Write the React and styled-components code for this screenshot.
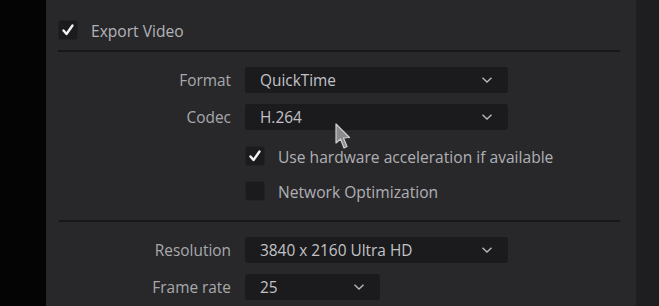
import React from 'react';
import styled, { createGlobalStyle } from 'styled-components';

const Global = createGlobalStyle`
    html, body {
        margin: 0;
        padding: 0;
        background: #030303;
        overflow: hidden;
    }
    body {
        font-family: "Open Sans", "Noto Sans", sans-serif;
    }
`;

const Screen = styled.div`
    display: flex;
    width: 659px;
    height: 306px;
    overflow: hidden;
`;

const LeftGap = styled.div`
    width: 46px;
    background: #040404;
`;

const Panel = styled.div`
    position: relative;
    width: 590px;
    background: #28282b;
    display: flex;
    flex-direction: column;
`;

const RightGap = styled.div`
    flex: 1;
    background: #1e1e21;
`;

const HeaderRow = styled.div`
    display: flex;
    align-items: center;
    gap: 13px;
    padding: 20px 0 0 12px;
    height: 20px;
`;

const HeaderText = styled.span`
    color: #b4b4b8;
    font-size: 15.6px;
    line-height: 20px;
    padding-top: 1px;
`;

const Divider = styled.div`
    height: 2px;
    background: #17171a;
    margin: ${p => p.$mt}px 16px 0 ${p => p.$ml}px;
`;

const Row = styled.div`
    display: flex;
    align-items: center;
    height: 26px;
    margin-top: ${p => p.$mt}px;
`;

const Label = styled.div`
    width: 199px;
    box-sizing: border-box;
    padding: 2px 14px 0 0;
    text-align: right;
    color: #a8a8ac;
    font-size: 15.4px;
    line-height: 20px;
`;

const Select = styled.div`
    width: ${p => p.$w}px;
    height: 26px;
    box-sizing: border-box;
    background: #1b1b1e;
    border-radius: 3px;
    display: flex;
    align-items: center;
    justify-content: space-between;
    padding: 0 15px;
    color: #c2c2c6;
    font-size: 15.4px;
    line-height: 20px;

    span {
        padding-top: 2px;
    }
`;

const CheckRow = styled.div`
    display: flex;
    align-items: center;
    gap: 13px;
    height: 20px;
    margin: ${p => p.$mt}px 0 0 199px;
    color: #b0b0b4;
    font-size: 15.6px;
    line-height: 20px;

    span {
        padding-top: 1px;
    }
`;

const Box = styled.div`
    width: 20px;
    height: 20px;
    box-sizing: border-box;
    border-radius: 3px;
    background: #1b1b1e;
    border: 1px solid #222225;
    display: flex;
    align-items: center;
    justify-content: center;
`;

const Cursor = styled.svg`
    position: absolute;
    left: 288px;
    top: 122px;
    filter: blur(0.7px);
`;

const Check = ({ on }) => (
    <Box>
        {on && (
            <svg width="14" height="14" viewBox="0 0 14 14">
                <path d="M2.5 7.5 L5.5 11 L11.5 2.5" fill="none" stroke="#f2f2f2" strokeWidth="2.4" strokeLinecap="round" strokeLinejoin="round" />
            </svg>
        )}
    </Box>
);

const Chevron = () => (
    <svg width="12" height="8" viewBox="0 0 12 8">
        <path d="M1.5 1.8 L6 6 L10.5 1.8" fill="none" stroke="#b8b8bc" strokeWidth="1.4" />
    </svg>
);

const Dropdown = ({ value, width }) => (
    <Select $w={width}>
        <span>{value}</span>
        <Chevron />
    </Select>
);

const App = () => {
    return (
        <>
            <Global />
            <Screen>
                <LeftGap />
                <Panel>
                    <HeaderRow>
                        <Check on />
                        <HeaderText>Export Video</HeaderText>
                    </HeaderRow>
                    <Divider $mt={10} $ml={12} />
                    <Row $mt={15}>
                        <Label>Format</Label>
                        <Dropdown value="QuickTime" width={263} />
                    </Row>
                    <Row $mt={11}>
                        <Label>Codec</Label>
                        <Dropdown value="H.264" width={263} />
                    </Row>
                    <CheckRow $mt={16}>
                        <Check on />
                        <span>Use hardware acceleration if available</span>
                    </CheckRow>
                    <CheckRow $mt={15}>
                        <Check />
                        <span>Network Optimization</span>
                    </CheckRow>
                    <Divider $mt={19} $ml={13} />
                    <Row $mt={15}>
                        <Label>Resolution</Label>
                        <Dropdown value="3840 x 2160 Ultra HD" width={263} />
                    </Row>
                    <Row $mt={11}>
                        <Label>Frame rate</Label>
                        <Dropdown value="25" width={135} />
                    </Row>
                    <Cursor width="20" height="30" viewBox="0 0 20 30">
                        <path d="M2 2 L2 21 L6.5 17 L10 26 L13 24.5 L9.5 16 L15.5 15.5 Z" fill="#8a8a8e" stroke="#cfcfd2" strokeWidth="1.2" strokeLinejoin="round" />
                    </Cursor>
                </Panel>
                <RightGap />
            </Screen>
        </>
    );
};

export default App;
